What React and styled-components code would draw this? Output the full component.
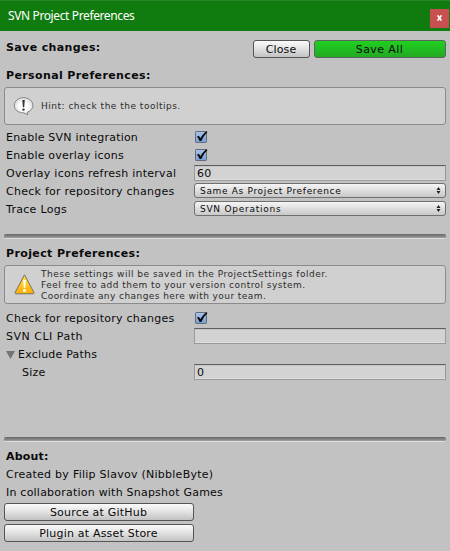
import React from 'react';
import styled, { createGlobalStyle } from 'styled-components';

const GlobalStyle = createGlobalStyle`
  * { box-sizing: border-box; }
  body { margin: 0; background: #c2c2c2; overflow: hidden; }
  button, input { font: inherit; color: inherit; }
`;

const Window = styled.main`
  width: 450px;
  height: 551px;
  background: #c2c2c2;
  color: #0a0a0a;
  font: 11px/18px "DejaVu Sans", sans-serif;
  white-space: nowrap;
`;

const TitleBar = styled.header`
  display: flex;
  align-items: center;
  justify-content: space-between;
  height: 31px;
  padding: 0 1px 0 8px;
  background: #107c10;
  border-top: 1px solid #288828;
  color: #fff;
  font: 12px/20px "Noto Sans", sans-serif;
`;

const TitleText = styled.span`
  letter-spacing: ${(p) => p.$spacing}px;
`;

const CloseBox = styled.button`
  display: grid;
  place-items: center;
  width: 19px;
  height: 19px;
  margin-top: 4px;
  padding: 0;
  border: 0;
  background: #c75050;
`;

const Content = styled.div`
  display: flex;
  flex-direction: column;
  padding: 7px 4px 0;
`;

const Text = styled.span`
  letter-spacing: ${(p) => p.$spacing || 0}px;
`;

const Heading = styled.h2`
  height: 18px;
  margin: ${(p) => p.$top || 0}px 0 0;
  padding: 1px 0 0 2px;
  font-size: 11px;
  font-weight: 700;
  line-height: 18px;
  letter-spacing: ${(p) => p.$spacing || 0}px;
`;

const Toolbar = styled.div`
  display: grid;
  grid-template-columns: 1fr 57px 132px;
  column-gap: 4px;
  height: 20px;
`;

const Button = styled.button`
  height: 18px;
  margin-top: ${(p) => p.$top || 0}px;
  padding: 1px 1px 0 0;
  border: 1px solid ${(p) => (p.$green ? '#5d665d' : '#555')};
  border-radius: 3px;
  background: ${(p) =>
    p.$green
      ? 'linear-gradient(#20d020, #22aa22)'
      : 'linear-gradient(#fafafa, #e4e4e4 45%, #c2c2c2)'};
  line-height: 15px;
`;

const HelpBox = styled.div`
  display: flex;
  align-items: center;
  height: ${(p) => p.$height}px;
  margin-top: ${(p) => p.$top}px;
  padding-left: 8px;
  border: 1px solid #8b8b8b;
  border-radius: 3px;
  background: #d0d0d0;
  color: #2c2c2c;
  font-size: 9px;
  line-height: 11px;
`;

const HelpIcon = styled.svg`
  width: 22px;
  height: 22px;
  margin: 0 6px ${(p) => p.$bottom || 0}px 0;
`;

const HelpLines = styled.div`
  display: flex;
  flex-direction: column;
  margin-top: 2px;
`;

const Rows = styled.div`
  margin-top: ${(p) => p.$top}px;
`;

const Row = styled.label`
  display: grid;
  grid-template-columns: 188px 252px;
  height: 18px;
  padding-left: 2px;
`;

const Label = styled.span`
  display: flex;
  align-items: center;
  height: 18px;
  padding: 2px 0 0 ${(p) => p.$indent || 0}px;
  letter-spacing: ${(p) => p.$spacing || 0}px;
`;

const Field = styled.input`
  width: 252px;
  height: 16px;
  margin-top: 1px;
  padding: 1px 2px 0;
  border: 1px solid #999;
  border-top-color: #5e5e5e;
  border-radius: 0;
  background: #d3d3d3;
  box-shadow: inset 0 1px #c6c6c6, inset 0 -1px #dfdfdf;
  line-height: 13px;
  letter-spacing: 0.3px;
  outline: 0;
`;

const Popup = styled.button`
  display: flex;
  align-items: center;
  justify-content: space-between;
  width: 252px;
  height: 15px;
  margin-top: 1px;
  padding: 0 4px 0 5px;
  border: 1px solid #707070;
  border-radius: 3px;
  background: linear-gradient(#f5f5f5, #dedede 50%, #c8c8c8);
  font-size: 9px;
  line-height: 13px;
`;

const PopupText = styled(Text)`
  padding-top: 1px;
`;

const Check = styled.svg`
  width: 15px;
  height: 15px;
  margin-top: 2px;
`;

const Separator = styled.div`
  flex: none;
  height: 5px;
  margin-top: ${(p) => p.$top}px;
  border-radius: 2px;
  background: linear-gradient(#6b6b6b 0 1px, #7c7c7c 1px 2px, #868686 2px 3px, #999 3px 4px, #dedede 4px 5px);
`;

const Links = styled.div`
  display: flex;
  flex-direction: column;
  width: 190px;
  gap: 3px;
  margin-top: 2px;
`;

const Foldout = styled.svg`
  width: 9px;
  height: 8px;
  margin-right: 3px;
`;

function Checkbox() {
  return (
    <Check viewBox="0 0 15 15">
      <defs>
        <linearGradient id="box" x1="0" y1="0" x2="0" y2="1">
          <stop stopColor="#a9c3e8" />
          <stop offset="1" stopColor="#769ed6" />
        </linearGradient>
      </defs>
      <rect x="1.5" y="1.5" width="11" height="11" rx=".7" fill="url(#box)" stroke="#636c78" />
      <path d="M2.900 6.600 5 6.100 6.400 8.300C8 5.400 9.800 3.200 12.400 1.200L13.500 2C11 4.400 9 7.400 7.300 11H5.600C4.900 9.200 4 7.800 2.900 6.600Z" fill="#050505" />
    </Check>
  );
}

function Arrows() {
  return (
    <svg width="5" height="7" viewBox="0 0 5 7" fill="#202020">
      <path d="M2.500 0 4.500 3H.5ZM.5 4h4l-2 3Z" />
    </svg>
  );
}

function PropertyRow({ label, spacing, indent, children }) {
  return (
    <Row>
      <Label $spacing={spacing} $indent={indent}>{label}</Label>
      {children}
    </Row>
  );
}

export default function App() {
  return (
    <Window>
      <GlobalStyle />
      <TitleBar>
        <TitleText $spacing={-0.38}>SVN Project Preferences</TitleText>
        <CloseBox aria-label="Close window">
          <svg width="5" height="6" viewBox="0 0 5 6" stroke="#fff" strokeWidth="1.6">
            <path d="M.6.4 4.4 5.6M4.4.4.6 5.6" />
          </svg>
        </CloseBox>
      </TitleBar>
      <Content>
        <Toolbar>
          <Heading $spacing={0.38}>Save changes:</Heading>
          <Button $top={2}><Text $spacing={0.15}>Close</Text></Button>
          <Button $top={2} $green><Text $spacing={0.4}>Save All</Text></Button>
        </Toolbar>
        <Heading $top={8} $spacing={0.38}>Personal Preferences:</Heading>
        <HelpBox $height={38} $top={3}>
          <HelpIcon viewBox="0 0 22 22">
            <defs>
              <radialGradient id="bubble">
                <stop offset=".5" stopColor="#fff" />
                <stop offset="1" stopColor="#dcdcdc" />
              </radialGradient>
            </defs>
            <path d="M10.500 2.700C5.200 2.700 1.300 6.200 1.300 10.500S5.200 17.800 10.500 17.800L14.800 19.800 14.500 17.100C17.800 16 19.900 13.500 19.900 10.500 19.900 6.200 15.800 2.700 10.500 2.700Z" fill="url(#bubble)" stroke="#858585" />
            <path d="M9.300 5h2.500l-.6 7.200H9.900Z" fill="#333" />
            <circle cx="10.500" cy="14.600" r="1.200" fill="#333" />
          </HelpIcon>
          <PopupText $spacing={0.5}>Hint: check the the tooltips.</PopupText>
        </HelpBox>
        <Rows $top={3}>
          <PropertyRow label="Enable SVN integration" spacing={0.2}><Checkbox /></PropertyRow>
          <PropertyRow label="Enable overlay icons" spacing={0.2}><Checkbox /></PropertyRow>
          <PropertyRow label="Overlay icons refresh interval" spacing={0.26}><Field defaultValue="60" /></PropertyRow>
          <PropertyRow label="Check for repository changes" spacing={0.26}>
            <Popup><PopupText $spacing={0.67}>Same As Project Preference</PopupText><Arrows /></Popup>
          </PropertyRow>
          <PropertyRow label="Trace Logs" spacing={0.3}>
            <Popup><PopupText $spacing={0.75}>SVN Operations</PopupText><Arrows /></Popup>
          </PropertyRow>
        </Rows>
        <Separator $top={16} />
        <Heading $top={5} $spacing={0.38}>Project Preferences:</Heading>
        <HelpBox $height={39} $top={3}>
          <HelpIcon viewBox="0 0 22 22" $bottom={2}>
            <defs>
              <linearGradient id="warning" x1="0" y1="0" x2="0" y2="1">
                <stop stopColor="#ffe24b" />
                <stop offset="1" stopColor="#ffad05" />
              </linearGradient>
            </defs>
            <path d="M11.500 1.800 20.900 19.500Q21.100 20.800 20 20.800H3Q1.900 20.800 2.100 19.500Z" fill="url(#warning)" stroke="#77715f" strokeLinejoin="round" />
            <path d="M10.200 7h2.600l-.5 7.800h-1.600Z" fill="#fff" />
            <circle cx="11.500" cy="17.400" r="1.500" fill="#fff" />
          </HelpIcon>
          <HelpLines>
            <Text $spacing={0.5}>These settings will be saved in the ProjectSettings folder.</Text>
            <Text $spacing={0.46}>Feel free to add them to your version control system.</Text>
            <Text $spacing={0.43}>Coordinate any changes here with your team.</Text>
          </HelpLines>
        </HelpBox>
        <Rows $top={5}>
          <PropertyRow label="Check for repository changes" spacing={0.26}><Checkbox /></PropertyRow>
          <PropertyRow label="SVN CLI Path" spacing={0.5}><Field aria-label="SVN CLI Path" /></PropertyRow>
          <PropertyRow
            label={<><Foldout viewBox="0 0 9 8"><path d="M0 0h9L4.500 8Z" fill="#737373" /></Foldout>Exclude Paths</>}
            spacing={0.2}
          />
          <PropertyRow label="Size" spacing={0.2} indent={16}><Field defaultValue="0" /></PropertyRow>
        </Rows>
        <Separator $top={56} />
        <Heading $top={5} $spacing={0.2}>About:</Heading>
        <PropertyRow label="Created by Filip Slavov (NibbleByte)" spacing={0.26} />
        <PropertyRow label="In collaboration with Snapshot Games" spacing={0.22} />
        <Links>
          <Button><Text $spacing={0.2}>Source at GitHub</Text></Button>
          <Button><Text $spacing={0.2}>Plugin at Asset Store</Text></Button>
        </Links>
      </Content>
    </Window>
  );
}
